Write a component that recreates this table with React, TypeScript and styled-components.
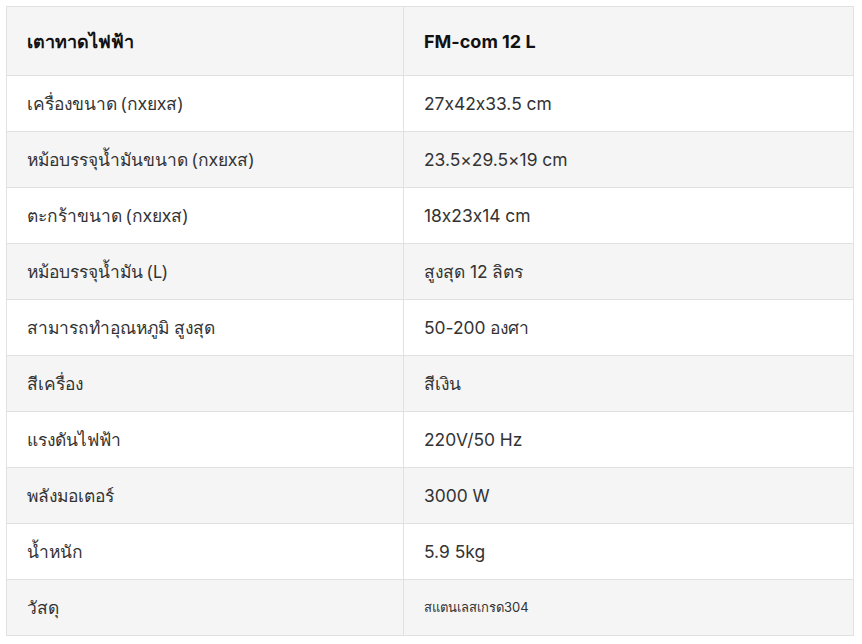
import React from "react";
import styled, { createGlobalStyle } from "styled-components";

const Global = createGlobalStyle`
  html, body { margin: 0; padding: 0; background: #ffffff; }
  body { font-family: "Noto Sans", "DejaVu Sans", sans-serif; color: #333333; }
`;

const Page = styled.div`
  padding: 6px 0 0 6px;
  width: 848px;
`;

const Table = styled.div`
  display: grid;
  grid-template-columns: 397px 1fr;
  border-top: 1px solid #e1e1e1;
  border-left: 1px solid #e1e1e1;
`;

const Cell = styled.div<{ $shade: boolean; $head?: boolean; $value?: boolean; $small?: boolean }>`
  height: ${(p) => (p.$head ? 68 : 55)}px;
  display: flex;
  align-items: center;
  padding-left: 20px;
  background: ${(p) => (p.$shade ? "#f5f5f5" : "#ffffff")};
  border-right: 1px solid #e1e1e1;
  border-bottom: 1px solid #e1e1e1;
  font-size: ${(p) => (p.$head ? 18 : p.$small ? 13 : 17.4)}px;
  font-weight: ${(p) => (p.$head ? 700 : 400)};
  color: ${(p) => (p.$head ? "#111111" : "#333333")};
  font-family: ${(p) =>
    p.$value ? '"Inter", "Noto Sans", sans-serif' : '"Noto Sans", "DejaVu Sans", sans-serif'};
  font-feature-settings: "calt" 0;
  white-space: nowrap;
`;

const rows: [string, string, boolean?][] = [
  ["เครื่องขนาด (กxยxส)", "27x42x33.5 cm"],
  ["หม้อบรรจุน้ำมันขนาด (กxยxส)", "23.5×29.5×19 cm"],
  ["ตะกร้าขนาด (กxยxส)", "18x23x14 cm"],
  ["หม้อบรรจุน้ำมัน (L)", "สูงสุด 12 ลิตร"],
  ["สามารถทำอุณหภูมิ สูงสุด", "50-200 องศา"],
  ["สีเครื่อง", "สีเงิน"],
  ["แรงดันไฟฟ้า", "220V/50 Hz"],
  ["พลังมอเตอร์", "3000 W"],
  ["น้ำหนัก", "5.9 5kg"],
  ["วัสดุ", "สแตนเลสเกรด304", true],
];

export default function App() {
  return (
    <>
      <Global />
      <Page>
        <Table>
          <Cell $shade $head>เตาทาดไฟฟ้า</Cell>
          <Cell $shade $head $value>FM-com 12 L</Cell>
          {rows.map(([label, value, small], i) => (
            <React.Fragment key={label}>
              <Cell $shade={i % 2 === 1}>{label}</Cell>
              <Cell $shade={i % 2 === 1} $value $small={!!small}>{value}</Cell>
            </React.Fragment>
          ))}
        </Table>
      </Page>
    </>
  );
}
